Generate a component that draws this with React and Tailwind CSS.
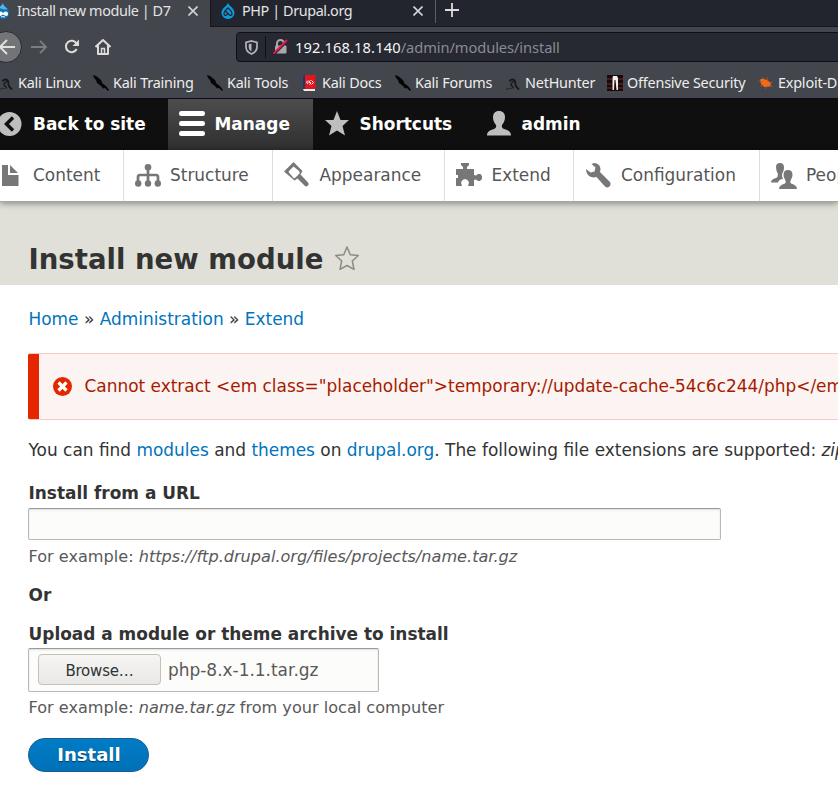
const kaliDragon = (
  <svg width="16" height="16" viewBox="0 0 16 16" fill="none" stroke="#15171a">
    <path d="M1 14.500C3 13.500 5 13 7 13.500" strokeWidth="1.200" stroke="#2a2c30" />
    <path d="M4.500 6.500C5 5 6 4.500 7.500 4.500C10.500 4.500 10.500 7.500 10.500 10C11 12 12.500 13 14 14.500" strokeWidth="1.800" />
    <path d="M8.500 6.500C5.500 9 5 9.500 7 11C8 12 8.500 13 8 13.500" strokeWidth="1.300" />
  </svg>
);

const kaliStick = (
  <svg width="16" height="16" viewBox="0 0 16 16" fill="#050505">
    <path d="M0 0L3 1L5 2.500L8 5L9.500 8.500L13 11L16 15L15 16L12 13L10 13.500L8 11L4 8L3 5L1 3Z" />
  </svg>
);

const docsIcon = (
  <svg width="13" height="16" viewBox="0 0 13 16">
    <path d="M1.500 0H12.500V14H1.500Z" fill="#e0171d" />
    <path d="M0 1L2 0V14H0Z" fill="#173b70" />
    <path d="M0 14H12V16H1Z" fill="#eee" />
    <path d="M5 5.500L3.500 7L5 9M8.500 5.500L10.500 7.500L8.500 9.500M7.500 5.500L5.500 7L8 8L6.500 9.500" fill="none" stroke="#fff" strokeWidth="1" />
  </svg>
);

const offsecIcon = (
  <svg width="16" height="16" viewBox="0 0 16 16">
    <path d="M0 0H16V16H0Z" fill="#1c0709" />
    <path d="M0 4H5M11 4H16M0 9H5M11 9H16M0 13H5M11 13H16" stroke="#6b3434" strokeWidth="1" />
    <path d="M6 1H10L11 3V15H9.500L8.500 5H7.500L7 15H5.500V3Z" fill="#f3eeee" />
  </svg>
);

const exploitIcon = (
  <svg width="16" height="14" viewBox="0 0 16 14">
    <path d="M2 3.500L5 2.500L9 4L13 7L12.500 10.500L6 11L3 8Z" fill="#f46a17" />
    <path d="M4 1L7 4M0 5L5 6M2 10L6 9M7 13L9 10M9 1L10 6M15 6L11 7M15 11L11 9" stroke="#b85b26" strokeWidth=".6" />
  </svg>
);

const bookmarks = [
  { label: "Kali Linux", icon: kaliDragon, width: "w-[95px]", gap: "gap-[4px]" },
  { label: "Kali Training", icon: kaliStick, width: "w-[114px]", gap: "gap-[4px]" },
  { label: "Kali Tools", icon: kaliStick, width: "w-[96px]", gap: "gap-[4px]" },
  { label: "Kali Docs", icon: docsIcon, width: "w-[92px]", gap: "gap-[6px]" },
  { label: "Kali Forums", icon: kaliStick, width: "w-[110px]", gap: "gap-[4px]" },
  { label: "NetHunter", icon: kaliDragon, width: "w-[102px]", gap: "gap-[4px]" },
  { label: "Offensive Security", icon: offsecIcon, width: "w-[151px]", gap: "gap-[4px]" },
  { label: "Exploit-DB", icon: exploitIcon, width: "w-[110px]", gap: "gap-[4px]" },
];

function Close() {
  return (
    <svg width="10" height="10" viewBox="0 0 10 10" stroke="#d3d4d5" strokeWidth="1.600">
      <path d="M0.500 0.500L9.500 9.500M9.500 0.500L0.500 9.500" />
    </svg>
  );
}

function Tabs() {
  return (
    <div className="flex h-[27px] bg-[#23252e] text-[14.4px] leading-[22px] tracking-[-0.4px] text-[#e4e4e4]">
      <div className="flex h-[27px] w-[210px] shrink-0 bg-[#43464c]">
        <svg className="-ml-[5px] mt-[3px] shrink-0" width="15" height="16" viewBox="0 0 15 16">
          <path d="M8 0C8 3 14 4 14 10C14 14 11 16 7.500 16S1 14 1 10C1 5 7 4 8 0Z" fill="#0b73ba" />
          <path d="M8 0C8 3 11 4 12.500 6C9 7 5 6 4 4C6 3 7 2 8 0Z" fill="#53b4e5" />
          <path d="M3 11C3 8 6 8 8 10C10 8 13 8 13 11S10 13 8 11.500C6 13 3 14 3 11Z" fill="#fff" />
          <path d="M6 14C7 13.500 9 13.500 10 14" fill="none" stroke="#fff" strokeWidth="1" />
        </svg>
        <span className="ml-[7px] w-[171px] shrink-0 whitespace-nowrap">Install new module | D7</span>
        <span className="mt-[6px]"><Close /></span>
      </div>
      <div className="flex h-[27px] w-[226px] shrink-0 border-b border-l border-[#14161b]">
        <svg className="ml-[10px] mt-[3px] shrink-0" width="14" height="16" viewBox="0 0 14 16">
          <path d="M7 0C8 3 13.500 5 13.500 10A6.500 6 0 0 1 .5 10C.5 5 6 3 7 0Z" fill="#0b9ce0" />
          <path d="M7 5C5 7 3 8 3 10.500C3 13 5 13 7 10.500C9 13 11 13 11 10.500C11 8 9 7 7 5ZM4.500 8L9 12.500" fill="none" stroke="#23252e" strokeWidth="1.300" />
        </svg>
        <span className="ml-[7px] w-[171px] shrink-0 whitespace-nowrap">PHP | Drupal.org</span>
        <span className="mt-[6px]"><Close /></span>
      </div>
      <div className="flex h-[27px] grow border-b border-[#14161b]">
        <span className="-ml-px h-[23px] w-px bg-[#5d5f65]" />
        <svg className="ml-[9px] mt-[3px]" width="14" height="14" viewBox="0 0 14 14" stroke="#dcdcdc" strokeWidth="1.800">
          <path d="M7 0V14M0 7H14" />
        </svg>
      </div>
    </div>
  );
}

function AddressRow() {
  return (
    <div className="flex h-[38px] bg-[#43464c]">
      <div className="-ml-[10px] mt-[4px] flex size-8 shrink-0 items-center justify-center rounded-full border border-[#292b2f] bg-[#737477]">
        <svg width="17" height="16" viewBox="0 0 17 16" fill="none" stroke="#dfdfdc" strokeWidth="2">
          <path d="M17 8H2M9 1L2 8L9 15" />
        </svg>
      </div>
      <svg className="ml-[9px] mt-[13px] shrink-0" width="16" height="14" viewBox="0 0 16 14" fill="none" stroke="#7d7e81" strokeWidth="1.800">
        <path d="M0 7H15M9 .8L15 7L9 13.200" />
      </svg>
      <svg className="ml-[17px] mt-[12px] shrink-0" width="16" height="16" viewBox="0 0 16 16" fill="none" stroke="#dcdcd9" strokeWidth="2">
        <path d="M12.700 10A5.700 5.700 0 1 1 12.500 4.500" />
        <path d="M15 .5V7H8.500Z" fill="#dcdcd9" stroke="none" />
      </svg>
      <svg className="ml-[15px] mt-[12px] shrink-0" width="16" height="16" viewBox="0 0 16 16" fill="none" stroke="#dcdcd9" strokeWidth="2">
        <path d="M.5 8L8 1L15.500 8M3 6.500V15H13V6.500" strokeLinejoin="round" />
        <path d="M6.500 15V9.500H9.500V15" strokeWidth="1.500" />
      </svg>
      <div className="-mr-2 ml-[125px] mt-[5px] flex h-[30px] grow rounded-[4px] border border-[#0f1015] bg-[#262832]">
        <svg className="ml-[8px] mt-[7px] shrink-0" width="13" height="15" viewBox="0 0 13 15">
          <path d="M6.500 1L12 2.500V7C12 10 10 12.500 6.500 14C3 12.500 1 10 1 7V2.500Z" fill="none" stroke="#b4b4b7" strokeWidth="1.700" />
          <path d="M6.500 3.500V11.500C4.500 10 3.700 9 3.700 7V4.300Z" fill="#b4b4b7" />
        </svg>
        <span className="ml-[7px] mt-[3px] h-[22px] w-px bg-[#0f1015]" />
        <svg className="ml-[7px] mt-[6px] shrink-0" width="15" height="16" viewBox="0 0 15 16">
          <path d="M4 7V4.500A3.500 3.500 0 0 1 11 4.500V7" fill="none" stroke="#a9a9ac" strokeWidth="2" />
          <rect x="2" y="6.500" width="11.500" height="8" rx="1" fill="#a9a9ac" />
          <path d="M1 15.500L15 1.500" stroke="#262832" strokeWidth="2" />
          <path d="M.5 14.500L14 1" stroke="#ee1748" strokeWidth="1.900" />
        </svg>
        <span className="ml-[7px] whitespace-nowrap text-[14.67px] leading-[28px] text-[#8b8c91]">
          <span className="tracking-[0.12px] text-[#f5f5f5]">192.168.18.140</span>
          <span className="tracking-[-0.08px]">/admin/modules/install</span>
        </span>
      </div>
    </div>
  );
}

function Bookmarks() {
  return (
    <div className="flex h-[33px] overflow-hidden bg-[#43464c] text-[14.4px] tracking-[-0.2px] text-[#eeeeec]">
      <div className="-ml-[2px] flex shrink-0">
        {bookmarks.map((b) => (
          <div key={b.label} className={`flex h-[33px] shrink-0 items-center whitespace-nowrap ${b.gap} ${b.width}`}>
            <span className="mt-[2px] flex shrink-0 justify-center">{b.icon}</span>
            <span className="pt-[2px]">{b.label}</span>
          </div>
        ))}
      </div>
    </div>
  );
}

function AdminBar() {
  return (
    <nav className="flex h-[52px] items-center border-t border-[#0a0a10] bg-[#0f0f0f] text-[16.95px] font-bold text-white">
      <div className="flex h-full w-[168px] shrink-0 items-center">
        <svg className="-ml-[3px] -mt-px mr-[11px] shrink-0" width="25" height="24" viewBox="0 0 25 24">
          <circle cx="12.500" cy="12" r="12" fill="#bebebe" />
          <path d="M16 5.500L9.500 12L16 18.500" fill="none" stroke="#0f0f0f" strokeWidth="3.500" />
        </svg>
        <span className="whitespace-nowrap">Back to site</span>
      </div>
      <div className="flex h-full w-[145px] shrink-0 items-center bg-gradient-to-b from-[#4d4d4d] to-[#2f2f2f]">
        <svg className="-mt-[3px] ml-[11px] mr-[9.5px] shrink-0" width="26" height="25" viewBox="0 0 26 25" fill="#fff">
          <rect width="26" height="5" rx="2.300" />
          <rect y="10" width="26" height="5" rx="2.300" />
          <rect y="20" width="26" height="5" rx="2.300" />
        </svg>
        <span>Manage</span>
      </div>
      <div className="flex h-full w-[162px] shrink-0 items-center">
        <svg className="-mt-[3px] ml-[12px] mr-[10.5px] shrink-0" width="24" height="25" viewBox="0 0 24 25" fill="#bebebe">
          <path d="M12 0L15.500 9H24L17.500 15L20 24.500L12 19.500L4 24.500L6.500 15L0 9H8.500Z" />
        </svg>
        <span>Shortcuts</span>
      </div>
      <div className="flex h-full items-center">
        <svg className="-mt-[3px] ml-[12px] mr-[10.5px] shrink-0" width="24" height="25" viewBox="0 0 24 25" fill="#bebebe">
          <path d="M12 0C16 0 18 2.500 18 6.500C18 10 16.500 12 15 14C14.500 16 15 17 17 18C21 19 24 20.500 24 24.500H0C0 20.500 3 19 7 18C9 17 9.500 16 9 14C7.500 12 6 10 6 6.500C6 2.500 8 0 12 0Z" />
        </svg>
        <span>admin</span>
      </div>
    </nav>
  );
}

const menu = [
  {
    label: "Content", cell: "w-[124px]", text: "ml-[14px]",
    icon: (
      <svg className="-mt-px shrink-0" width="19" height="21" viewBox="0 0 19 21" fill="#777">
        <path d="M2 0H8V10H18.500V21H2ZM10 0L18 8H10Z" />
      </svg>
    ),
  },
  {
    label: "Structure", cell: "w-[149px] pl-[11px]", text: "ml-[9px]",
    icon: (
      <svg className="shrink-0" width="26" height="23" viewBox="0 0 26 23" fill="#777">
        <path d="M3 19V13Q3 11 5 11H21Q23 11 23 13V19M13 3V20" fill="none" stroke="#777" strokeWidth="2.700" />
        <circle cx="13" cy="3.300" r="3.300" /><circle cx="3.200" cy="19.500" r="3.200" /><circle cx="13" cy="19.500" r="3.200" /><circle cx="22.800" cy="19.500" r="3.200" />
      </svg>
    ),
  },
  {
    label: "Appearance", cell: "w-[172px] pl-[11px]", text: "ml-[10.5px]",
    icon: (
      <svg className="-mt-[2px] shrink-0" width="25" height="25" viewBox="0 0 25 25" fill="#777">
        <path fillRule="evenodd" d="M0 9.500L9.500 0L18.500 9L16.500 12.500L24 20.500Q25.500 22.500 23.500 24Q22 25 20.500 23.500L13.500 16.500L10.500 18.500ZM5.500 8.500L4.500 10L9.500 16Q11 16.500 12 15L15.500 11.500Q16 10 15 9L9.500 4.500Z" />
      </svg>
    ),
  },
  {
    label: "Extend", cell: "w-[129px] pl-[11px]", text: "ml-[9.500px]",
    icon: (
      <svg className="-mt-[3px] shrink-0" width="26" height="23" viewBox="0 0 26 23" fill="#777">
        <path d="M0 6H7V4L5 2V0H13V2L11 4V6H18V12L20 12.500L22 11H24.500L26 13V16L24 18H22L20 16.500L18 17V23H12L13 19.500L11.500 17L9 16L6.500 17L5 19.500L6 23H0V15H2V12H0Z" />
      </svg>
    ),
  },
  {
    label: "Configuration", cell: "w-[186px] pl-[12px]", text: "ml-[10px]",
    icon: (
      <svg className="-mt-px shrink-0" width="25" height="25" viewBox="0 0 25 25" fill="#777">
        <path d="M5.500 1L8 0Q14 .5 14.500 6L14 9L24 19Q25.500 21.500 23 24Q21 25 19 23.500L10.500 14Q5 15.500 2 12Q0 9.500 0 6L4.500 9.500L8.500 8.500L9.500 4.500Z" />
      </svg>
    ),
  },
  {
    label: "People", cell: "w-[120px] border-r-0 pl-[11px]", text: "ml-[9px]",
    icon: (
      <svg className="mt-[1px] shrink-0" width="26" height="26" viewBox="0 0 26 26" fill="#777">
        <path d="M9 0Q13 0 13 4.500Q13 7 12 9Q10 12 12 16Q8 16 7 19.500H0Q0 16 5 15Q7 14 7 11Q5 8 5 4Q5 0 9 0Z" />
        <path d="M17 7Q21.500 7 21.500 12Q21.500 14.500 20 16.500Q18.500 19 20 20.500Q26 22 26 26H8Q8 22 14 20.500Q15.500 19 14 16.500Q12.500 14.500 12.500 12Q12.500 7 17 7Z" />
      </svg>
    ),
  },
];

function Tray() {
  return (
    <nav className="relative flex h-[51px] bg-white text-[16.95px] text-[#565656] shadow-[0_1px_0_#a6a8a2,0_2px_7px_rgba(0,0,0,0.45)]">
      {menu.map((m) => (
        <div key={m.label} className={`flex shrink-0 items-center border-r border-[#ddd] ${m.cell}`}>
          {m.icon}
          <span className={m.text}>{m.label}</span>
        </div>
      ))}
    </nav>
  );
}

const link = "text-[#0074bd]";

export default function App() {
  return (
    <div className="h-[812px] w-[838px] overflow-hidden bg-white font-['DejaVu_Sans',sans-serif]">
      <div className="font-['Noto_Sans',sans-serif]">
        <Tabs />
        <AddressRow />
        <Bookmarks />
      </div>
      <AdminBar />
      <Tray />
      <header className="flex h-[84px] bg-[#e0e0d8] pl-[28.5px] pt-[39px]">
        <h1 className="whitespace-nowrap pt-px text-[27.55px] font-bold leading-[36px] text-[#333]">Install new module</h1>
        <svg className="ml-[12px] mt-[6px]" width="24" height="25" viewBox="0 0 24 25" fill="none" stroke="#8b8b7d" strokeWidth="1.500">
          <path d="M12 1L15.300 8.700L23.300 9.500L17.300 15L19 23.300L12 19.500L5 23.300L6.700 15L.7 9.500L8.700 8.700Z" strokeLinejoin="round" />
        </svg>
      </header>
      <main className="whitespace-nowrap pl-[28px] text-[16.95px] leading-[26px] text-[#333]">
        <div className="pl-[0.5px] pt-[21px]">
          <span className={link}>Home</span> » <span className={link}>Administration</span> » <span className={link}>Extend</span>
        </div>
        <div className="mt-[21px] flex h-[67px] items-center overflow-hidden rounded-l-[2px] border-y border-[#f9c9bf] bg-[#fcf4f2] text-[#a51b00]">
          <span className="h-[67px] w-[11px] shrink-0 bg-[#e62600]" />
          <svg className="ml-[14px] mr-[12.5px] shrink-0" width="19" height="19" viewBox="0 0 19 19">
            <circle cx="9.500" cy="9.500" r="9.500" fill="#e32700" />
            <path d="M5.500 5.500L13.500 13.500M13.500 5.500L5.500 13.500" stroke="#fff" strokeWidth="3.200" />
          </svg>
          <span className="pb-[2px]">{'Cannot extract <em class="placeholder">temporary://update-cache-54c6c244/php</em>'}</span>
        </div>
        <p className="mt-[17px] pl-[0.5px]">
          You can find <span className={link}>modules</span> and <span className={link}>themes</span> on <span className={link}>drupal.org</span>. The following file extensions are supported: <em>zip</em>
        </p>
        <div className="mt-[17px] pl-[0.5px] font-bold">Install from a URL</div>
        <div className="mt-[2px] h-[32px] w-[693px] rounded-[2px] border border-[#b8b8b8] border-t-[#999] bg-[#fcfcfa] shadow-[inset_0_1px_2px_rgba(0,0,0,0.12)]" />
        <div className="mt-[4px] pl-[0.5px] text-[16.12px] text-[#595959]">For example: <em>https://ftp.drupal.org/files/projects/name.tar.gz</em></div>
        <div className="mt-[12px] pl-[0.5px] font-bold">Or</div>
        <div className="mt-[13px] pl-[0.5px] font-bold">Upload a module or theme archive to install</div>
        <div className="mt-[1px] flex h-[44px] w-[351px] rounded-[2px] border border-[#b8b8b8] border-t-[#999] bg-[#fcfcfa] shadow-[inset_0_1px_2px_rgba(0,0,0,0.12)]">
          <div className="ml-[9px] mt-[5px] flex h-[31px] w-[123px] items-center justify-center rounded-[4px] border border-[#c5c0ba] bg-gradient-to-b from-[#f6f5f4] to-[#e9e8e6] pt-[2px] text-[15px] tracking-[-0.2px] text-[#2e3436]">Browse…</div>
          <span className="ml-[7px] mt-[8px] text-[#595959]">php-8.x-1.1.tar.gz</span>
        </div>
        <div className="mt-[3px] pl-[0.5px] text-[16.12px] text-[#595959]">For example: <em>name.tar.gz</em> from your local computer</div>
        <div className="mt-[17px] flex h-[34px] w-[121px] items-center justify-center rounded-full border border-[#1e5c90] bg-gradient-to-b from-[#007bc6] to-[#0071b8] pl-px text-[18px] font-bold text-white [text-shadow:0_1px_1px_rgba(0,0,0,0.5)]">Install</div>
      </main>
    </div>
  );
}
